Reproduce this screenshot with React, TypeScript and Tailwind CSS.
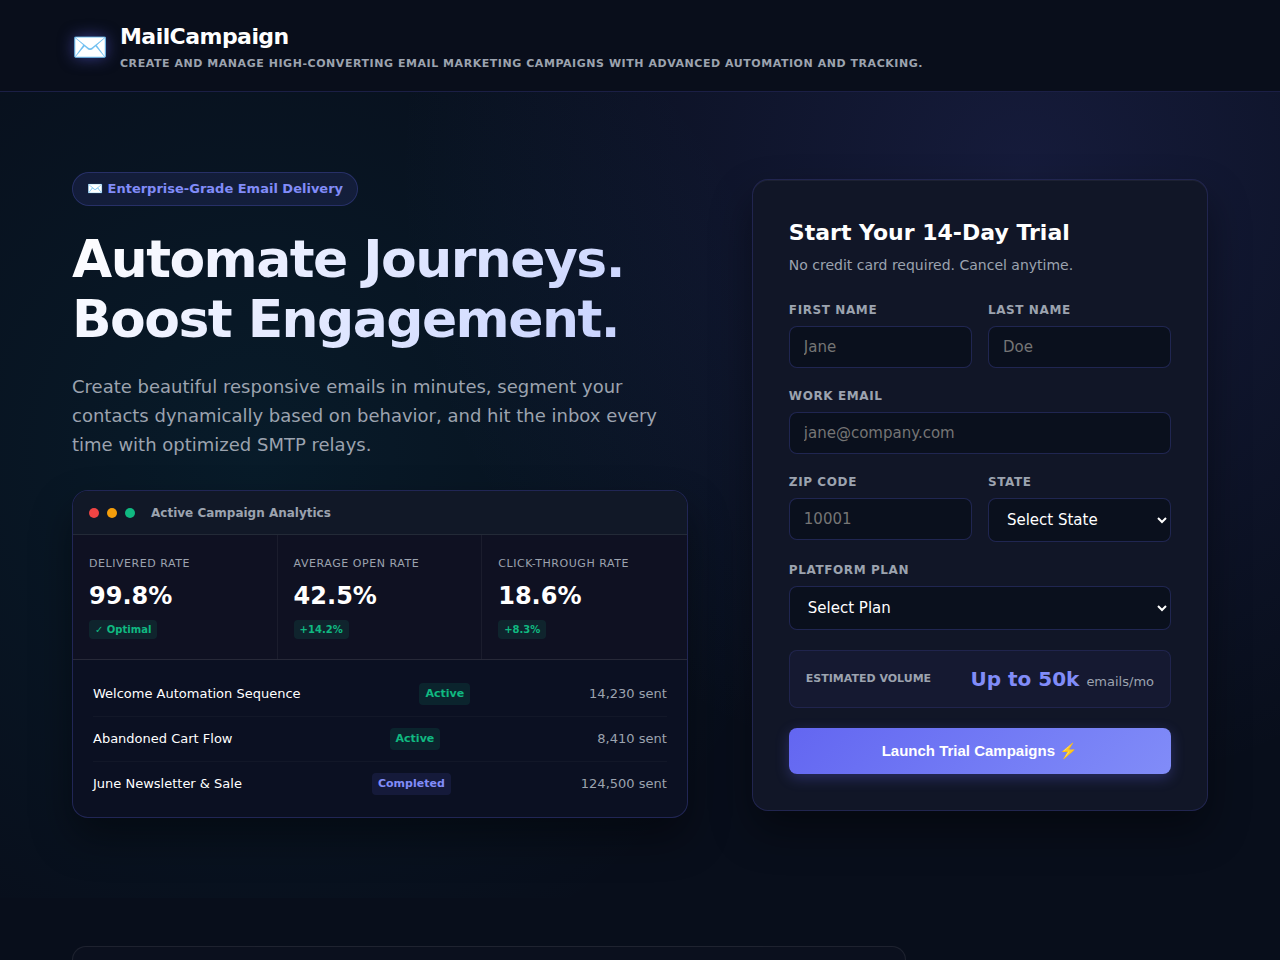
import { useState } from 'react';
import type { ReactNode } from 'react';

const STATS = [
  { label: 'Delivered Rate', value: '99.8%', change: '✓ Optimal' },
  { label: 'Average Open Rate', value: '42.5%', change: '+14.2%' },
  { label: 'Click-Through Rate', value: '18.6%', change: '+8.3%' },
];

const CAMPAIGNS = [
  { name: 'Welcome Automation Sequence', status: 'Active', sent: '14,230 sent' },
  { name: 'Abandoned Cart Flow', status: 'Active', sent: '8,410 sent' },
  { name: 'June Newsletter & Sale', status: 'Completed', sent: '124,500 sent' },
];

const STATES = ['California', 'Florida', 'New York', 'Texas', 'Washington'];

const PLANS = [
  { id: 'starter', name: 'Starter', volume: 'Up to 50k' },
  { id: 'growth', name: 'Growth', volume: 'Up to 250k' },
  { id: 'scale', name: 'Scale', volume: 'Up to 1M' },
];

const inputClass =
  'w-full rounded-lg border border-[#6366f1]/25 bg-[#0a101d] px-3.5 py-[11px] text-[15px] leading-[18px] text-white placeholder:text-[#757575] outline-none focus:border-[#6366f1]';
const selectClass =
  'w-full h-11 rounded-lg border border-[#6366f1]/25 bg-[#0a101d] px-3.5 text-[15px] text-white outline-none focus:border-[#6366f1]';

function Field({ id, label, children }: { id: string; label: string; children: ReactNode }) {
  return (
    <div>
      <label htmlFor={id} className="block mb-2 text-xs leading-4 font-bold uppercase tracking-wider text-[#9ca3af]">
        {label}
      </label>
      {children}
    </div>
  );
}

function Analytics() {
  return (
    <div className="rounded-2xl border border-[#6366f1]/25 bg-[#0b1022] overflow-hidden shadow-[0_20px_40px_rgba(0,0,0,0.4)]">
      <div className="flex items-center gap-2 px-4 h-11 bg-[#111827] border-b border-white/8">
        <span className="w-2.5 h-2.5 rounded-full bg-[#ef4444]" />
        <span className="w-2.5 h-2.5 rounded-full bg-[#f59e0b]" />
        <span className="w-2.5 h-2.5 rounded-full bg-[#10b981]" />
        <span className="ml-2 text-xs font-bold text-[#9ca3af]">Active Campaign Analytics</span>
      </div>

      <div className="grid grid-cols-3 bg-[#0f1122] border-b border-white/10">
        {STATS.map(({ label, value, change }) => (
          <div key={label} className="px-4 py-5 border-r border-white/5 last:border-r-0">
            <p className="text-[11px] leading-[18px] uppercase tracking-wider text-[#9ca3af]">{label}</p>
            <p className="mt-[7px] mb-2 text-2xl leading-8 font-bold text-white">{value}</p>
            <span className="block w-fit px-1.5 rounded bg-[#10b981]/12 text-[10px] leading-[19px] font-bold text-[#10b981]">
              {change}
            </span>
          </div>
        ))}
      </div>

      <ul className="px-5 pt-3 pb-[11px]">
        {CAMPAIGNS.map(({ name, status, sent }) => (
          <li key={name} className="flex items-center justify-between py-[11px] text-[13px] leading-5 border-b border-white/3 last:border-b-0">
            <span className="text-white">{name}</span>
            <span
              className={`px-1.5 py-px rounded text-[11px] font-bold ${
                status === 'Active' ? 'bg-[#10b981]/12 text-[#10b981]' : 'bg-[#6366f1]/12 text-[#818cf8]'
              }`}
            >
              {status}
            </span>
            <span className="text-[#9ca3af]">{sent}</span>
          </li>
        ))}
      </ul>
    </div>
  );
}

function TrialForm() {
  const [plan, setPlan] = useState('');
  const volume = PLANS.find(p => p.id === plan)?.volume ?? 'Up to 50k';

  return (
    <form
      onSubmit={e => e.preventDefault()}
      className="rounded-2xl border border-[#6366f1]/20 bg-[#111627] p-9 shadow-[0_20px_40px_rgba(0,0,0,0.4),inset_0_1px_0_rgba(255,255,255,0.05)]"
    >
      <h2 className="text-[22px] leading-[34px] font-bold text-white">Start Your 14-Day Trial</h2>
      <p className="mt-[5px] mb-[27px] text-[14px] leading-5 text-[#9ca3af]">No credit card required. Cancel anytime.</p>

      <div className="flex flex-col gap-5">
        <div className="grid grid-cols-2 gap-4">
          <Field id="first-name" label="First Name">
            <input id="first-name" type="text" placeholder="Jane" className={inputClass} />
          </Field>
          <Field id="last-name" label="Last Name">
            <input id="last-name" type="text" placeholder="Doe" className={inputClass} />
          </Field>
        </div>
        <Field id="email" label="Work Email">
          <input id="email" type="email" placeholder="jane@company.com" className={inputClass} />
        </Field>
        <div className="grid grid-cols-2 gap-4">
          <Field id="zip" label="Zip Code">
            <input id="zip" type="text" placeholder="10001" className={inputClass} />
          </Field>
          <Field id="state" label="State">
            <select id="state" className={selectClass}>
              <option value="">Select State</option>
              {STATES.map(s => <option key={s}>{s}</option>)}
            </select>
          </Field>
        </div>
        <Field id="plan" label="Platform Plan">
          <select id="plan" value={plan} onChange={e => setPlan(e.target.value)} className={selectClass}>
            <option value="">Select Plan</option>
            {PLANS.map(p => <option key={p.id} value={p.id}>{p.name}</option>)}
          </select>
        </Field>

        <div className="flex items-center justify-between px-4 h-[58px] rounded-lg border border-[#6366f1]/15 bg-[#6366f1]/5">
          <span className="text-[11px] font-bold uppercase text-[#9ca3af]">Estimated Volume</span>
          <span className="text-xl font-bold text-[#818cf8]">
            {volume} <span className="text-[13px] font-normal text-[#9ca3af]">emails/mo</span>
          </span>
        </div>

        <button
          type="submit"
          className="h-[46px] rounded-lg bg-linear-135 from-[#6366f1] to-[#818cf8] font-['Liberation_Sans',sans-serif] text-[15px] font-bold text-white shadow-[0_4px_14px_rgba(99,102,241,0.3)] cursor-pointer"
        >
          Launch Trial Campaigns ⚡
        </button>
      </div>
    </form>
  );
}

export default function App() {
  return (
    <div className="min-h-screen flex flex-col bg-[#080e1b] font-['DejaVu_Sans',sans-serif] text-white">
      <header className="border-b border-[#6366f1]/20 bg-[#090e1b]">
        <div className="mx-auto w-full max-w-[1200px] px-8 pt-[21px] pb-[19px] flex items-center gap-3">
          <span className="text-[29px] leading-9 [text-shadow:0_0_15px_rgba(99,102,241,0.5)]">✉️</span>
          <div>
            <h1 className="text-[22px] leading-8 font-bold tracking-tight">MailCampaign</h1>
            <p className="mt-0.5 text-[11px] leading-[17px] font-bold uppercase tracking-wider text-[#9ca3af]">
              Create and manage high-converting email marketing campaigns with advanced automation and tracking.
            </p>
          </div>
        </div>
      </header>

      <main className="flex-1 flex flex-col">
        <section className="bg-[radial-gradient(circle_at_80%_10%,rgba(99,102,241,0.15),transparent_50%),radial-gradient(circle_at_20%_45%,rgba(6,182,212,0.08),transparent_50%)]">
          <div className="mx-auto w-full max-w-[1200px] px-8 py-20 grid grid-cols-[1.35fr_1fr] gap-16 items-center">
            <div>
              <span className="block w-fit px-3.5 h-[34px] leading-8 rounded-full border border-[#6366f1]/25 bg-[#6366f1]/12 text-[13px] font-bold text-[#818cf8]">
                ✉️ Enterprise-Grade Email Delivery
              </span>
              <h2 className="w-fit mt-[23px] text-[52px] leading-[60px] font-bold tracking-[-0.03em] bg-linear-135 from-white to-[#c7d2fe] bg-clip-text text-transparent">
                Automate Journeys.<br />Boost Engagement.
              </h2>
              <p className="mt-[23px] mb-[31px] text-lg leading-[29px] text-[#9ca3af]">
                Create beautiful responsive emails in minutes, segment your contacts dynamically based on
                behavior, and hit the inbox every time with optimized SMTP relays.
              </p>
              <Analytics />
            </div>
            <TrialForm />
          </div>
        </section>

        <section className="flex-1 grid grid-cols-[1fr_270px] gap-8 mx-auto w-full max-w-[1200px] px-8 pt-12">
          <div className="rounded-t-2xl border border-b-0 border-white/8 bg-[#0b101e]" />
        </section>
      </main>
    </div>
  );
}
